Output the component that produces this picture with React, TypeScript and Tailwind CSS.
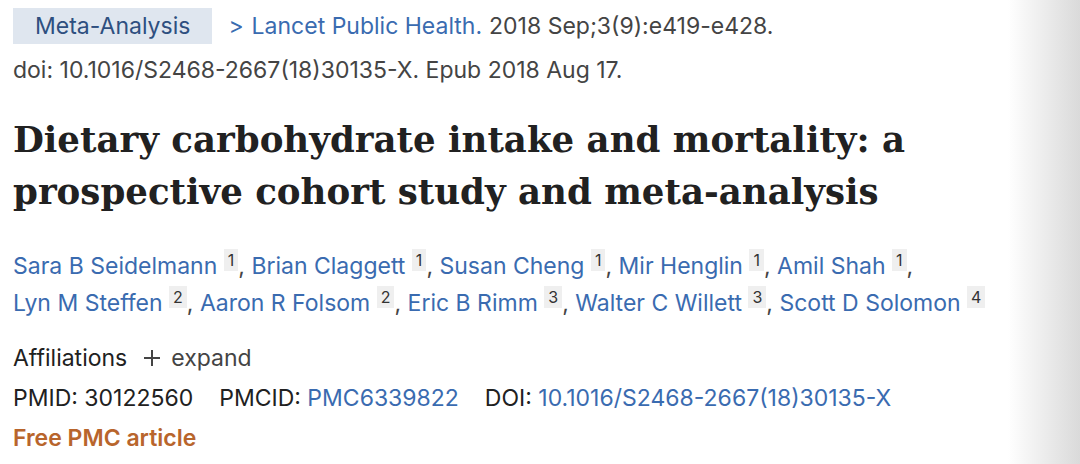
const AUTHORS_1: [string, string][] = [
  ["Sara B Seidelmann", "1"],
  ["Brian Claggett", "1"],
  ["Susan Cheng", "1"],
  ["Mir Henglin", "1"],
  ["Amil Shah", "1"],
];

const AUTHORS_2: [string, string][] = [
  ["Lyn M Steffen", "2"],
  ["Aaron R Folsom", "2"],
  ["Eric B Rimm", "3"],
  ["Walter C Willett", "3"],
  ["Scott D Solomon", "4"],
];

function AuthorLine({ authors, trailingComma }: { authors: [string, string][]; trailingComma?: boolean }) {
  return (
    <div className="whitespace-nowrap">
      {authors.map(([name, aff], i) => (
        <span key={name}>
          <span className="text-[#3a6bb0]">{name}</span>{" "}
          <span className="relative -top-[8px] bg-[#efefef] px-[4px] py-[1px] text-[16px] text-[#333]">{aff}</span>
          {(i < authors.length - 1 || trailingComma) && <span className="text-[#444]">, </span>}
        </span>
      ))}
    </div>
  );
}

export default function App() {
  return (
    <div className="flex h-[464px] w-[1080px] overflow-hidden bg-white font-['Inter',sans-serif] text-[23px] leading-[40px]">
      <div className="flex-1 pl-[13px]">
        <div className="flex items-center pt-[6px] text-[#444]">
          <span className="flex h-[36px] items-center bg-[#dfe6ef] px-[22px] text-[#2e4f7f]">Meta-Analysis</span>
          <span className="ml-[16px] text-[#3a6bb0]">
            <span className="mr-[8px]">&gt;</span>Lancet Public Health.
          </span>
          <span className="ml-[7px]">2018 Sep;3(9):e419-e428.</span>
        </div>
        <div className="mt-[4px] text-[#444]">
          doi: 10.1016/S2468-2667(18)30135-X. Epub 2018 Aug 17.
        </div>

        <h1 className="mt-[24px] font-['DejaVu_Serif',serif] text-[35.6px] font-bold leading-[52px] text-[#212121]">
          Dietary carbohydrate intake and mortality: a<br />
          prospective cohort study and meta-analysis
        </h1>

        <div className="mt-[31px] leading-[35px]">
          <AuthorLine authors={AUTHORS_1} trailingComma />
          <AuthorLine authors={AUTHORS_2} />
        </div>

        <div className="mt-[15px] flex items-center text-[#212121]">
          <span>Affiliations</span>
          <svg className="ml-[16px]" width="18" height="18" viewBox="0 0 18 18" fill="none" stroke="#444" strokeWidth="2">
            <path d="M9 1v16M1 9h16" />
          </svg>
          <span className="ml-[10px] text-[#444]">expand</span>
        </div>

        <div className="text-[#212121]">
          PMID: 30122560
          <span className="ml-[26px]">PMCID: </span>
          <span className="text-[#3a6bb0]">PMC6339822</span>
          <span className="ml-[26px]">DOI: </span>
          <span className="text-[#3a6bb0]">10.1016/S2468-2667(18)30135-X</span>
        </div>

        <div className="font-semibold text-[#b8652c]">Free PMC article</div>
      </div>
      <div className="w-[72px] bg-gradient-to-r from-white to-[#dadada]" />
    </div>
  );
}
